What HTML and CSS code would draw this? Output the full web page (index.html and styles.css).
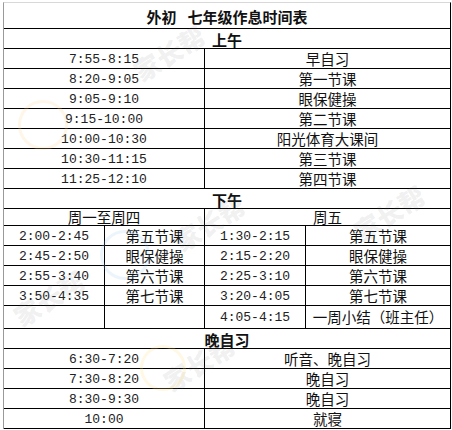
FILE: index.html
```html
<!DOCTYPE html>
<html lang="zh">
<head>
<meta charset="utf-8">
<title>外初 七年级作息时间表</title>
<link rel="stylesheet" href="styles.css">
</head>
<body>
<div class="page">
  <div class="sheet">
    <div class="row title"><div class="cell full">外初<span class="gap"></span>七年级作息时间表</div></div>
    <div class="row sec"><div class="cell full">上午</div></div>
    <div class="row"><div class="cell half t">7:55-8:15</div><div class="cell rest">早自习</div></div>
    <div class="row"><div class="cell half t">8:20-9:05</div><div class="cell rest">第一节课</div></div>
    <div class="row"><div class="cell half t">9:05-9:10</div><div class="cell rest">眼保健操</div></div>
    <div class="row"><div class="cell half t">9:15-10:00</div><div class="cell rest">第二节课</div></div>
    <div class="row"><div class="cell half t">10:00-10:30</div><div class="cell rest">阳光体育大课间</div></div>
    <div class="row"><div class="cell half t">10:30-11:15</div><div class="cell rest">第三节课</div></div>
    <div class="row"><div class="cell half t">11:25-12:10</div><div class="cell rest">第四节课</div></div>
    <div class="row sec"><div class="cell full">下午</div></div>
    <div class="row sub"><div class="cell half">周一至周四</div><div class="cell rest">周五</div></div>
    <div class="row"><div class="cell q1 t">2:00-2:45</div><div class="cell q2">第五节课</div><div class="cell q3 t">1:30-2:15</div><div class="cell q4">第五节课</div></div>
    <div class="row"><div class="cell q1 t">2:45-2:50</div><div class="cell q2">眼保健操</div><div class="cell q3 t">2:15-2:20</div><div class="cell q4">眼保健操</div></div>
    <div class="row"><div class="cell q1 t">2:55-3:40</div><div class="cell q2">第六节课</div><div class="cell q3 t">2:25-3:10</div><div class="cell q4">第六节课</div></div>
    <div class="row"><div class="cell q1 t">3:50-4:35</div><div class="cell q2">第七节课</div><div class="cell q3 t">3:20-4:05</div><div class="cell q4">第七节课</div></div>
    <div class="row tall"><div class="cell q1 t"></div><div class="cell q2"></div><div class="cell q3 t">4:05-4:15</div><div class="cell q4">一周小结（班主任）</div></div>
    <div class="row sec"><div class="cell full">晚自习</div></div>
    <div class="row"><div class="cell half t">6:30-7:20</div><div class="cell rest">听音、晚自习</div></div>
    <div class="row"><div class="cell half t">7:30-8:20</div><div class="cell rest">晚自习</div></div>
    <div class="row"><div class="cell half t">8:30-9:30</div><div class="cell rest">晚自习</div></div>
    <div class="row"><div class="cell half t">10:00</div><div class="cell rest">就寝</div></div>
  </div>
  <div class="wm wm1">家长帮</div>
  <div class="wm wm2">家长帮</div>
  <div class="wm wm3">家长帮</div>
  <div class="wm wm4">家长帮</div>
  <div class="wm wm5">家长帮</div>
  <div class="ring ring1"></div>
  <div class="ring ring2"></div>
  <div class="ring ring3"></div>
</div>
</body>
</html>
```

FILE: styles.css
```css
html, body {
  margin: 0;
  padding: 0;
  background: #fff;
}

.page {
  position: relative;
  width: 452px;
  height: 430px;
  overflow: hidden;
  font-family: "Noto Sans CJK SC", "Noto Sans", sans-serif;
  color: #111;
}

.sheet {
  box-sizing: border-box;
  width: 448px;
  margin: 2px 0 0 3px;
  border-top: 1px solid #d8d8d8;
  border-left: 1px solid #9a9a9a;
  border-right: 1px solid #000;
  display: flex;
  flex-direction: column;
}

.row {
  box-sizing: border-box;
  display: flex;
  height: 20px;
  border-bottom: 1px solid #000;
}

.row.title { height: 26px; }
.row.sub { height: 17px; }
.row.tall { height: 23px; }

.cell {
  box-sizing: border-box;
  display: flex;
  align-items: center;
  justify-content: center;
  font-size: 14.5px;
  line-height: 1;
  white-space: nowrap;
  padding-top: 1px;
}

.cell.full {
  flex: 1;
  font-weight: bold;
  font-size: 15px;
}

.gap {
  display: inline-block;
  width: 11px;
}

.cell.half {
  width: 201px;
  border-right: 1px solid #000;
}

.cell.rest { flex: 1; }

.cell.q1 { width: 101px; border-right: 1px solid #000; }
.cell.q2 { width: 100px; border-right: 1px solid #000; }
.cell.q3 { width: 101px; border-right: 1px solid #000; }
.cell.q4 { flex: 1; }

.cell.t {
  font-family: "Liberation Mono", "DejaVu Sans Mono", monospace;
  font-size: 13px;
  color: #222;
}

.wm {
  position: absolute;
  pointer-events: none;
  font-family: "Noto Sans CJK SC", sans-serif;
  font-weight: 900;
  font-size: 26px;
  line-height: 1;
  color: rgba(110, 110, 110, 0.10);
  transform: rotate(-32deg);
  white-space: nowrap;
}

.wm1 { left: 130px; top: 40px; }
.wm2 { left: 350px; top: 200px; }
.wm3 { left: 160px; top: 350px; }
.wm4 { left: 10px; top: 285px; }
.wm5 { left: 170px; top: 210px; }

.ring {
  position: absolute;
  pointer-events: none;
  border-radius: 50%;
  border: 3px solid rgba(150, 200, 240, 0.18);
}

.ring1 { left: 18px; top: 100px; width: 44px; height: 44px; border-color: rgba(250, 210, 140, 0.2); }
.ring2 { left: 100px; top: 230px; width: 44px; height: 44px; }
.ring3 { left: 140px; top: 345px; width: 40px; height: 40px; border-color: rgba(250, 220, 120, 0.2); }
```
